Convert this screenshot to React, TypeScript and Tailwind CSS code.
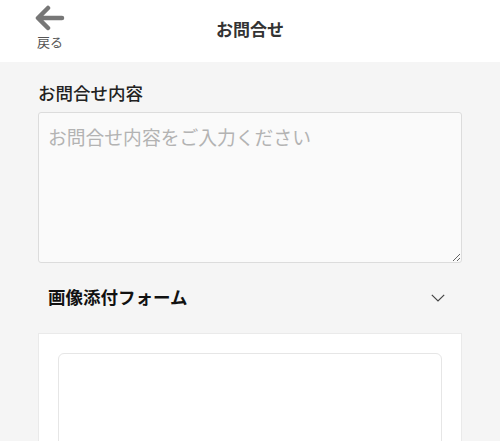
import React from 'react';

const font = { fontFamily: '"Noto Sans CJK JP", "Noto Sans", sans-serif' };

export default function App() {
    return (
        <div className="w-[500px] h-[441px] overflow-hidden bg-[#f5f5f5]" style={font}>
            {/* Header */}
            <header className="relative h-[62px] bg-white flex items-center justify-center">
                <button className="absolute left-[34px] top-[5px] flex flex-col items-center text-[#666]">
                    <svg width="32" height="26" viewBox="0 0 32 26" fill="none">
                        <path d="M28 13H5M14 3L4 13l10 10" stroke="#777" strokeWidth="4.5" strokeLinecap="round" strokeLinejoin="round" />
                    </svg>
                    <span className="text-[13px] leading-none mt-[4px] text-[#555]">戻る</span>
                </button>
                <h1 className="text-[17px] font-bold text-[#333] leading-none -mt-[6px]">お問合せ</h1>
            </header>

            <main className="px-[38px] pt-[22px]">
                <label className="block text-[17.5px] font-medium text-[#222] leading-none mb-[10px]">お問合せ内容</label>
                <textarea
                    className="block w-full h-[151px] bg-[#fafafa] border border-[#dcdcdc] rounded-[3px] px-[9px] pt-[10px] text-[18.8px] placeholder:text-[#b3b3b3] resize-y"
                    placeholder="お問合せ内容をご入力ください"
                />

                <div className="flex items-center justify-between pl-[10px] pr-[17px] h-[70px]">
                    <h2 className="text-[17.5px] font-bold text-[#111]">画像添付フォーム</h2>
                    <svg width="14" height="8" viewBox="0 0 14 8" fill="none">
                        <path d="M0.8 0.8L7 7l6.2-6.2" stroke="#444" strokeWidth="1.2" />
                    </svg>
                </div>

                <div className="bg-white border border-[#eaeaea] px-[19px] pt-[19px] h-[140px]">
                    <div className="h-[120px] border border-[#e6e6e6] rounded-[6px]" />
                </div>
            </main>
        </div>
    );
}
